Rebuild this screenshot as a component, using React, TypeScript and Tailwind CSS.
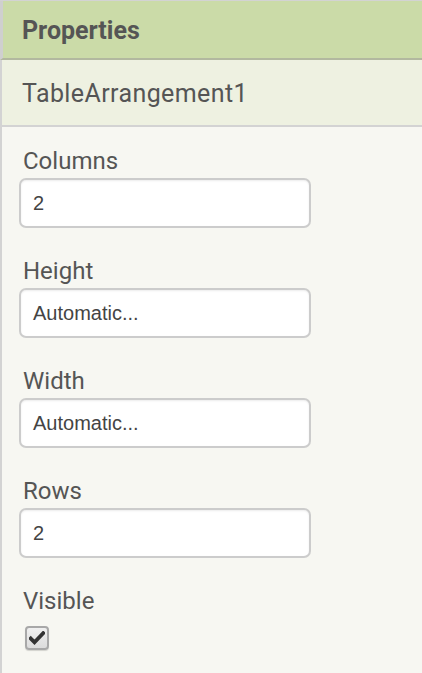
import React from "react";

const Field = ({ label, value }: { label: string; value: string }) => (
  <div className="flex flex-col">
    <div className="pl-[4px] text-[24px] leading-[28px] text-[#555] font-['Roboto',sans-serif]">{label}</div>
    <div className="mt-[3px] w-[292px] h-[50px] bg-white border-2 border-[#cccccc] rounded-[7px] shadow-[inset_0_1px_2px_rgba(0,0,0,0.08)] flex items-center px-[12px] text-[20px] text-[#444] font-['Liberation_Sans',Arial,sans-serif]">
      {value}
    </div>
  </div>
);

export default function App() {
  return (
    <div className="w-[422px] h-[673px] bg-[#f7f7f2] border-t border-[#d3d3d3] flex flex-col overflow-hidden font-['Roboto',sans-serif]">
      <div className="h-[59px] bg-[#cbdba8] border-l-[3px] border-[#cfcfcf] border-b-2 border-b-[#b2b89f] flex items-center pl-[19px] pt-[2px]">
        <span className="text-[25px] font-bold text-[#555]">Properties</span>
      </div>
      <div className="h-[67px] bg-[#eef1e1] border-l-[2px] border-[#d3d3d3] border-b-2 border-b-[#d3d3d3] flex items-center pl-[20px] pt-[3px]">
        <span className="text-[25px] tracking-[0.4px] text-[#555]">TableArrangement1</span>
      </div>
      <div className="flex-1 border-l-[2px] border-[#d3d3d3] pl-[17px] pt-[20px] flex flex-col gap-[29px]">
        <Field label="Columns" value="2" />
        <Field label="Height" value="Automatic..." />
        <Field label="Width" value="Automatic..." />
        <Field label="Rows" value="2" />
        <div className="flex flex-col">
          <div className="pl-[4px] text-[24px] leading-[28px] text-[#555]">Visible</div>
          <div className="mt-[11px] ml-[6px] w-[24px] h-[24px] rounded-[4px] border-2 border-[#a8a8a8] bg-gradient-to-b from-[#f0f0f0] to-[#dcdcdc] flex items-center justify-center shadow-[0_1px_1px_rgba(0,0,0,0.15)]">
            <svg width="16" height="14" viewBox="0 0 16 14">
              <path d="M1.8 7.5 L5.5 11.2 L14.2 2.2" stroke="#333" strokeWidth="3.8" fill="none" strokeLinecap="square" />
            </svg>
          </div>
        </div>
      </div>
    </div>
  );
}
